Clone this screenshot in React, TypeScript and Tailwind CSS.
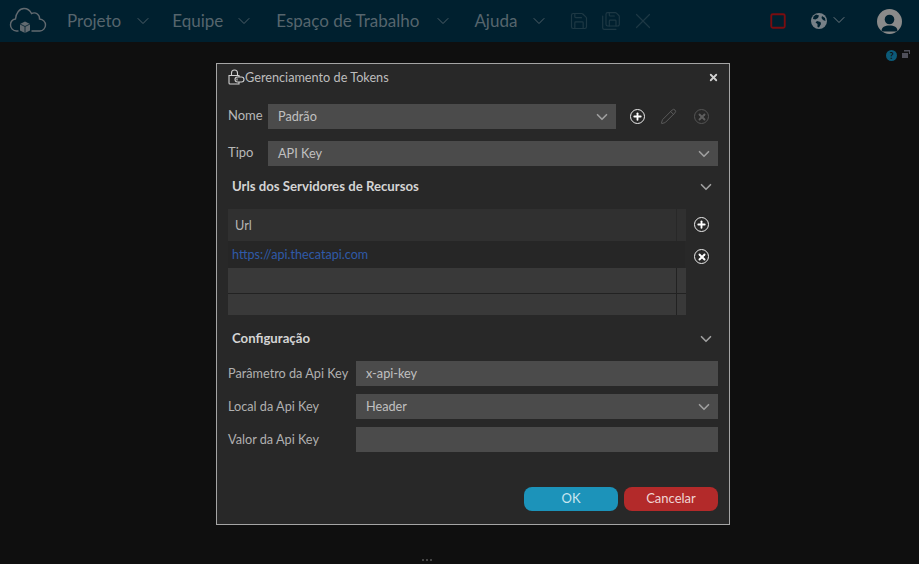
import { ChevronDown, Save, SaveAll, X, Square, Pencil, Plus } from 'lucide-react';

const font = { fontFamily: 'Lato, "Noto Sans", sans-serif' };

function NavItem({ label, gap }: { label: string; gap: string }) {
  return (
    <div className={`flex items-center ${gap}`}>
      <span className="text-[17px] text-[#56656d]">{label}</span>
      <ChevronDown size={20} strokeWidth={1.1} className="text-[#56656d]" />
    </div>
  );
}

function CircleBtn({ kind, dim }: { kind: 'add' | 'del'; dim?: boolean }) {
  const color = dim ? 'border-[#555] text-[#5e5e5e]' : 'border-[#ececec] text-white';
  return (
    <span className={`flex h-[15px] w-[15px] items-center justify-center rounded-full border ${color}`}>
      {kind === 'add' ? <Plus size={11} strokeWidth={4} /> : <X size={10} strokeWidth={4.5} />}
    </span>
  );
}

function Field({ value, chevron, className }: { value?: string; chevron?: boolean; className: string }) {
  return (
    <div className={`flex h-[25px] items-center justify-between bg-[#4b4b4b] pl-[10px] pr-[5px] text-[12.7px] text-[#c0c0c0] ${className}`}>
      <span className="pt-[1px]">{value}</span>
      {chevron && <ChevronDown size={18} strokeWidth={2.2} className="text-[#a0a0a0]" />}
    </div>
  );
}

function SectionTitle({ label }: { label: string }) {
  return (
    <div className="flex h-[20px] items-center justify-between pl-[4px] pr-[3px]">
      <span className="text-[13.2px] font-bold text-[#d4d4d4]">{label}</span>
      <ChevronDown size={18} strokeWidth={2.2} className="text-[#a0a0a0]" />
    </div>
  );
}

function ConfigRow({ label, value, chevron }: { label: string; value?: string; chevron?: boolean }) {
  return (
    <div className="flex items-center">
      <span className="w-[128px] text-[12.7px] text-[#b0b0b0]">{label}</span>
      <Field value={value} chevron={chevron} className="flex-1" />
    </div>
  );
}

function EmptyRow({ height, border }: { height: string; border?: boolean }) {
  return (
    <div className={`flex bg-[#393939] ${height} ${border ? 'border-b border-[#222]' : ''}`}>
      <div className="flex-1 border-r border-[#222]" />
      <div className="w-[9px]" />
    </div>
  );
}

export default function App() {
  return (
    <div className="relative h-[564px] w-[919px] overflow-hidden bg-[#0f0f0f]" style={font}>
      <header className="flex h-[42px] items-center bg-[#00202f] pl-[9px]">
        <svg width="38" height="30" viewBox="0 0 38 30" fill="none" className="mr-[20px]">
          <path d="M9 25H7.5C4 25 1.5 22 1.5 19C1.5 16 3.5 13.5 6.5 13C7 7 10.5 2.5 15 2.5C18 2.5 21 4.5 22.5 7.5C27 5.5 31 9 30.5 13C34 13.5 36.5 16 36.5 19C36.5 22 34 25 31 25H23" stroke="#626a70" strokeWidth="1.4" strokeLinecap="round" />
          <path d="M16 15.5L21 18V24.5L16 27L11 24.5V18Z" fill="#626a70" />
          <path d="M11 18L16 20.5L21 18M16 20.5V27" stroke="#00202f" strokeWidth="0.8" />
        </svg>
        <NavItem label="Projeto" gap="gap-[12px] mr-[19px]" />
        <NavItem label="Equipe" gap="gap-[11px] mr-[22px]" />
        <NavItem label="Espaço de Trabalho" gap="gap-[14px] mr-[21px]" />
        <NavItem label="Ajuda" gap="gap-[12px] mr-[20px]" />
        <div className="flex items-center text-[#1d3844]">
          <Save size={20} strokeWidth={1.4} className="mr-[12px]" />
          <SaveAll size={20} strokeWidth={1.4} className="mr-[9px]" />
          <X size={26} strokeWidth={1.1} />
        </div>
        <Square size={18} strokeWidth={2.5} className="ml-[113px] text-[#7a0d10]" />
        <svg width="16" height="16" viewBox="0 0 16 16" className="ml-[24px]">
          <circle cx="8" cy="8" r="8" fill="#778087" />
          <path d="M5 1.5L8 2.5L7 5L4.5 6.5L2 6L2.5 3.5ZM6 8L9.5 9L10 11L8 14.5L6.5 14L6.5 11L4.5 9.5ZM11 3L14 5L14.5 8L12 7L10.5 5Z" fill="#00202f" />
        </svg>
        <ChevronDown size={20} strokeWidth={1.1} className="mb-[2px] ml-[2px] text-[#778087]" />
        <div className="ml-[28px] flex h-[25px] w-[25px] items-end justify-center overflow-hidden rounded-full bg-[#8a8a8a]">
          <svg width="19" height="21" viewBox="0 0 19 21" fill="#00202f">
            <circle cx="9.5" cy="6.5" r="4.8" />
            <path d="M1.5 18.5C1.5 14 5 12.6 9.5 12.6C14 12.6 17.5 14 17.5 18.5Z" />
          </svg>
        </div>
      </header>

      <div className="absolute right-[9px] top-[49px] flex items-center gap-[5px]">
        <span className="mt-[1px] flex h-[11px] w-[11px] items-center justify-center rounded-full bg-[#0c5a78] text-[9px] font-bold text-[#0f0f0f]">?</span>
        <svg width="8" height="8" viewBox="0 0 8 8" fill="#50505a" className="mb-[3px]">
          <path d="M2 0H8V4H7V1.5H2Z" />
          <rect x="0" y="3" width="6" height="5" />
        </svg>
      </div>

      <div className="absolute left-[216px] top-[63px] flex h-[462px] w-[514px] flex-col border border-[#a5a5a5] bg-[#282828] px-[11px]">
        <div className="flex h-[26px] items-center justify-between pt-[1px]">
          <div className="flex items-center">
            <svg width="17" height="16" viewBox="0 0 17 16" fill="none" stroke="#d0d0d0" strokeWidth="1.1">
              <path d="M3.5 6V4C3.5 2 5 1 6.5 1C8 1 9.5 2 9.5 4V6" />
              <path d="M1 6.5H11V15H2C1.4 15 1 14.6 1 14Z" />
              <rect x="7" y="8" width="9" height="5" rx="2.5" fill="#282828" />
              <path d="M9 9.5V11.5" />
            </svg>
            <span className="text-[12.7px] text-[#bdbdbd]">Gerenciamento de Tokens</span>
          </div>
          <X size={11} strokeWidth={4} className="mr-[-1px] text-[#d0d0d0]" />
        </div>

        <div className="mt-[14px] flex items-center">
          <span className="w-[40px] pb-[1px] text-[13px] text-[#b8b8b8]">Nome</span>
          <Field value="Padrão" chevron className="w-[348px]" />
          <div className="flex items-center">
            <span className="ml-[14px]"><CircleBtn kind="add" /></span>
            <Pencil size={17} strokeWidth={1.3} className="ml-[15px] text-[#5e5e5e]" />
            <span className="ml-[17px]"><CircleBtn kind="del" dim /></span>
          </div>
        </div>

        <div className="mt-[12px] flex items-center">
          <span className="w-[40px] pb-[1px] text-[13px] text-[#b8b8b8]">Tipo</span>
          <Field value="API Key" chevron className="flex-1" />
        </div>

        <div className="mt-[11px]"><SectionTitle label="Urls dos Servidores de Recursos" /></div>

        <div className="mt-[12px] flex">
          <div className="w-[458px]">
            <div className="flex h-[32px] bg-[#303030]">
              <div className="flex flex-1 items-center border-r border-[#282828] pl-[7px] pt-[1px] text-[12.7px] text-[#b4b4b4]">Url</div>
              <div className="w-[9px]" />
            </div>
            <div className="mr-px flex h-[27px] items-center bg-[#262626] pl-[4px] pt-[2px] text-[12.6px] text-[#2f5aa8]">https://api.thecatapi.com</div>
            <EmptyRow height="h-[26px]" border />
            <EmptyRow height="h-[21px]" />
          </div>
          <div className="ml-[8px] flex flex-col gap-[17px] pt-[8px]">
            <CircleBtn kind="add" />
            <CircleBtn kind="del" />
          </div>
        </div>

        <div className="mt-[14px]"><SectionTitle label="Configuração" /></div>

        <div className="mt-[12px] flex flex-col gap-[8px]">
          <ConfigRow label="Parâmetro da Api Key" value="x-api-key" />
          <ConfigRow label="Local da Api Key" value="Header" chevron />
          <ConfigRow label="Valor da Api Key" />
        </div>

        <div className="mt-[35px] flex justify-end gap-[6px]">
          <button className="h-[24px] w-[94px] rounded-[8px] bg-[#1c93ba] text-[13px] text-[#c9e6f0]">OK</button>
          <button className="h-[24px] w-[94px] rounded-[8px] bg-[#b32a2a] text-[13px] text-[#f0d4d4]">Cancelar</button>
        </div>
      </div>

      <div className="absolute bottom-[3px] left-[422px] flex gap-[2px]">
        <span className="h-[2px] w-[2px] bg-[#444]" />
        <span className="h-[2px] w-[2px] bg-[#444]" />
        <span className="h-[2px] w-[2px] bg-[#444]" />
      </div>
    </div>
  );
}
